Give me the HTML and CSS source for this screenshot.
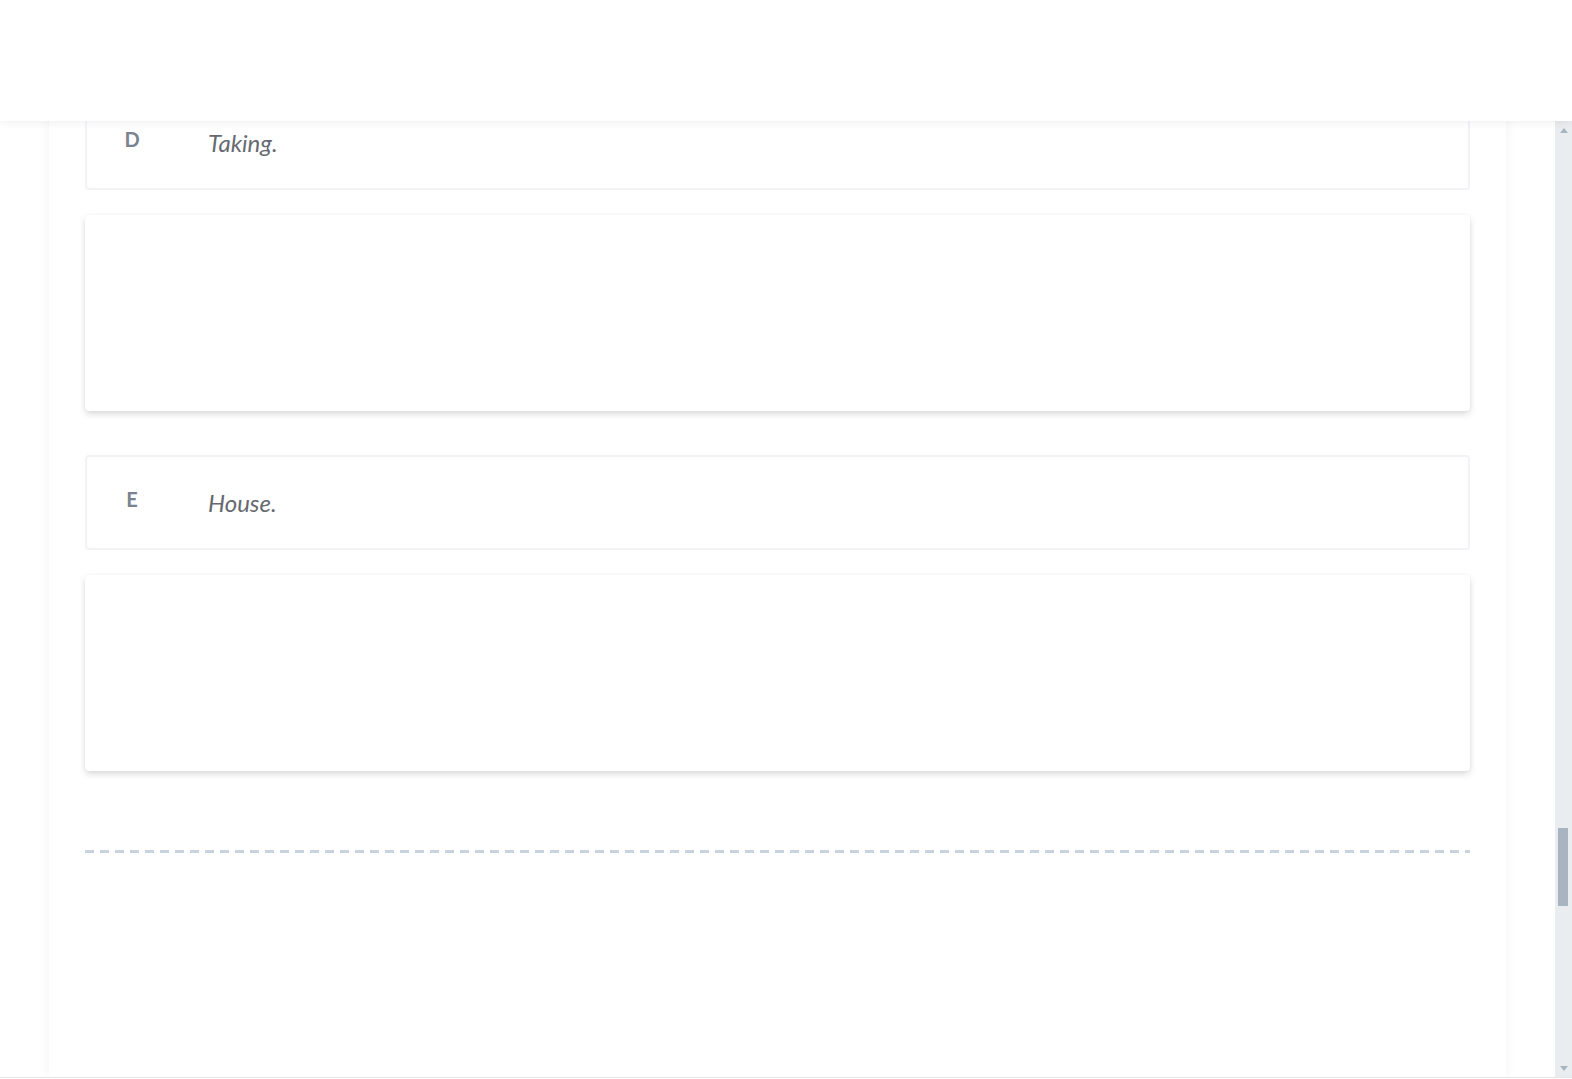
FILE: index.html
```html
<!DOCTYPE html>
<html lang="en">
<head>
<meta charset="utf-8">
<title>Options</title>
<link rel="stylesheet" href="styles.css">
</head>
<body>
<div class="app">
  <header class="header"></header>
  <div class="body">
    <div class="stage">
      <main class="panel">
        <div class="option">
          <span class="letter">D</span>
          <span class="answer">Taking.</span>
        </div>
        <div class="blank-card"></div>
        <div class="option option-gap">
          <span class="letter">E</span>
          <span class="answer">House.</span>
        </div>
        <div class="blank-card"></div>
        <div class="divider"></div>
      </main>
    </div>
    <div class="scrollbar">
      <span class="arrow arrow-up"></span>
      <div class="track">
        <span class="thumb"></span>
      </div>
      <span class="arrow arrow-down"></span>
    </div>
  </div>
</div>
</body>
</html>
```

FILE: styles.css
```css
html, body {
  margin: 0;
  padding: 0;
  background: #ffffff;
  font-family: Lato, "Noto Sans", sans-serif;
}

.app {
  height: 1077px;
  display: flex;
  flex-direction: column;
  border-bottom: 1px solid #e4e6e9;
  overflow: hidden;
}

.header {
  flex: 0 0 121px;
  background: #ffffff;
  box-shadow: 0 2px 8px rgba(0, 0, 0, 0.06);
  position: relative;
  z-index: 2;
}

.body {
  flex: 1;
  display: flex;
  min-height: 0;
}

.stage {
  flex: 1;
  padding: 0 49px 0 49px;
  background: #ffffff;
  overflow: hidden;
}

.panel {
  background: #ffffff;
  box-shadow: 0 0 12px rgba(0, 0, 0, 0.05);
  padding: 0 36px 0 36px;
  margin-top: -26px;
  height: calc(100% + 26px);
  box-sizing: border-box;
}

.option {
  height: 95px;
  box-sizing: border-box;
  border: 2px solid #f1f3f6;
  border-radius: 4px;
  display: flex;
  align-items: flex-start;
  padding: 30px 0 0 25px;
}

.option-gap {
  margin-top: 44px;
}

.letter {
  width: 40px;
  text-align: center;
  font-size: 20px;
  line-height: 1.2;
  font-weight: 700;
  color: #7a838e;
}

.answer {
  margin-left: 56px;
  font-size: 24px;
  line-height: 1.2;
  font-style: italic;
  color: #666a70;
  margin-top: 2px;
}

.blank-card {
  height: 196px;
  margin-top: 25px;
  background: #ffffff;
  border-radius: 4px;
  box-shadow: 0 3px 6px rgba(0, 0, 0, 0.15), 0 0 3px rgba(0, 0, 0, 0.03);
}

.divider {
  margin-top: 79px;
  height: 3px;
  background: repeating-linear-gradient(90deg, #c9d3dd 0 9px, transparent 9px 15px);
}

.scrollbar {
  flex: 0 0 17px;
  background: #e9edf0;
  display: flex;
  flex-direction: column;
  align-items: center;
}

.arrow {
  width: 0;
  height: 0;
  border-left: 4px solid transparent;
  border-right: 4px solid transparent;
}

.arrow-up {
  margin-top: 7px;
  border-bottom: 5px solid #a8b5c0;
}

.arrow-down {
  margin-bottom: 6px;
  border-top: 5px solid #a8b5c0;
}

.track {
  flex: 1;
  width: 100%;
  display: flex;
  flex-direction: column;
  align-items: center;
  padding-top: 695px;
  box-sizing: border-box;
}

.thumb {
  width: 10px;
  height: 78px;
  background: #a8b5c0;
  margin-left: -1px;
}
```
